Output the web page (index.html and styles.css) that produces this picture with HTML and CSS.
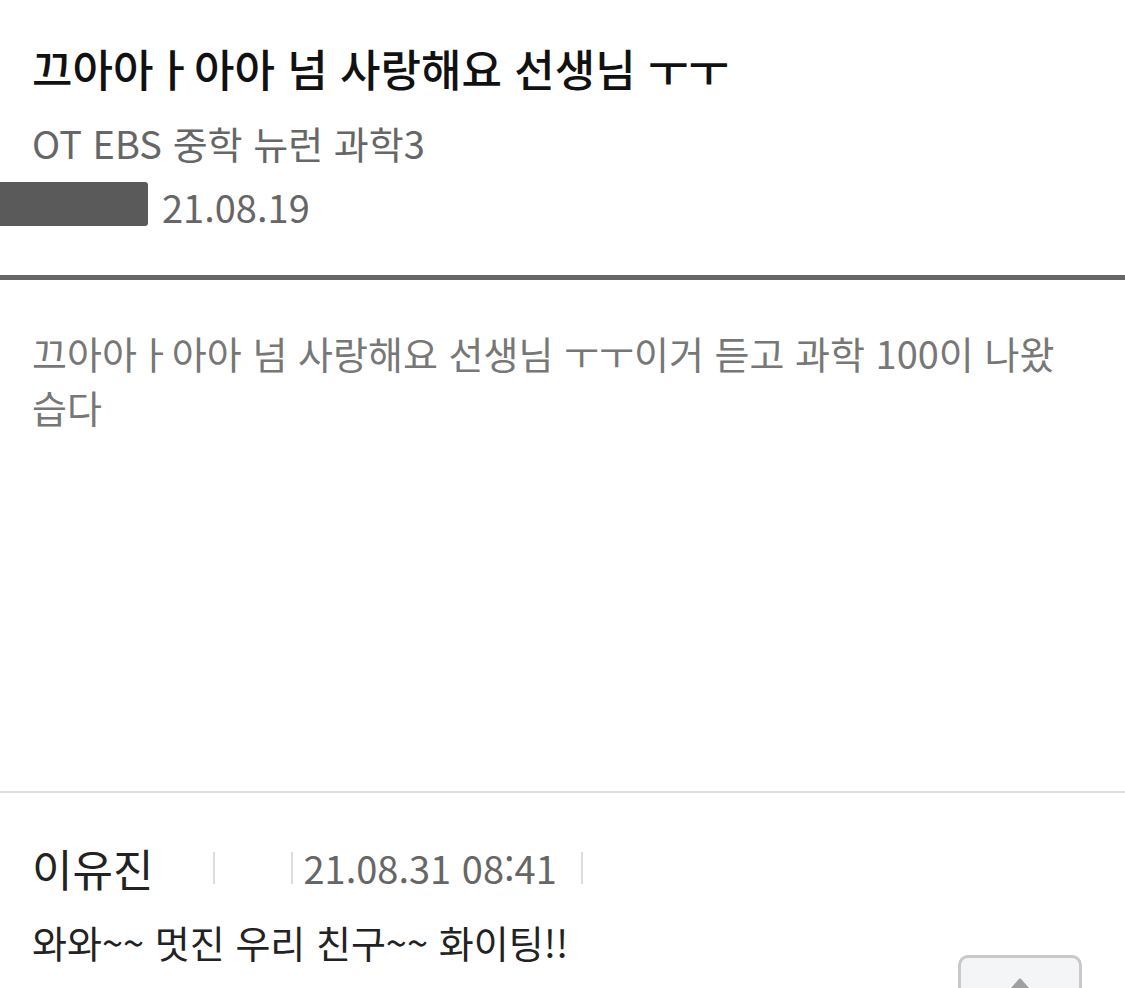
FILE: index.html
```html
<!DOCTYPE html>
<html lang="ko">
<head>
<meta charset="utf-8">
<link rel="stylesheet" href="styles.css">
</head>
<body>
<div class="page">
  <header class="post-head">
    <h1 class="title">끄아아ㅏ아아 넘 사랑해요 선생님 ㅜㅜ</h1>
    <div class="course">OT EBS 중학 뉴런 과학3</div>
    <div class="meta"><span class="redact"></span><span class="date">21.08.19</span></div>
  </header>
  <div class="post-body">끄아아ㅏ아아 넘 사랑해요 선생님 ㅜㅜ이거 듣고 과학 100이 나왔습다</div>
  <section class="comment">
    <div class="c-meta">
      <span class="c-name">이유진</span>
      <span class="bar bar-first"></span>
      <span class="gap"></span>
      <span class="bar"></span>
      <span class="c-date">21.08.31 08:41</span>
      <span class="bar"></span>
    </div>
    <div class="c-text">와와~~ 멋진 우리 친구~~ 화이팅!!</div>
  </section>
</div>
<button class="top-btn" aria-label="맨 위로"><svg width="40" height="30" viewBox="0 0 40 30"><path d="M20 4 L34 20 L6 20 Z" fill="#a0a0a0" stroke="#a0a0a0" stroke-width="3" stroke-linejoin="round"/></svg></button>
</body>
</html>
```
FILE: styles.css
```css
html, body {
  margin: 0;
  padding: 0;
  background: #fff;
  overflow: hidden;
}
body {
  font-family: "Noto Sans CJK KR", "Noto Sans", sans-serif;
  width: 1125px;
  height: 988px;
  position: relative;
}
.page {
  display: flex;
  flex-direction: column;
}
.post-head {
  padding: 38px 0 0 32px;
  height: 280px;
  box-sizing: border-box;
  border-bottom: 5px solid #666;
}
.title {
  margin: 0;
  font-size: 44px;
  font-weight: 500;
  color: #111;
  line-height: 60px;
}
.course {
  margin-top: 18px;
  font-size: 38px;
  color: #666;
  line-height: 54px;
}
.meta {
  display: flex;
  align-items: center;
  margin-left: -32px;
  margin-top: 10px;
  height: 54px;
}
.redact {
  display: block;
  width: 148px;
  height: 44px;
  margin-top: -6px;
  background: #5a5a5a;
  border-radius: 0 3px 3px 0;
}
.date {
  margin-left: 14px;
  font-size: 38px;
  color: #666;
  line-height: 54px;
}
.post-body {
  padding: 46px 60px 0 32px;
  height: 513px;
  box-sizing: border-box;
  font-size: 38px;
  line-height: 54px;
  color: #777;
  border-bottom: 2px solid #ddd;
}
.comment {
  padding: 45px 32px 0 32px;
}
.c-meta {
  display: flex;
  align-items: center;
  height: 60px;
}
.c-name {
  font-size: 44px;
  color: #222;
  line-height: 60px;
}
.bar {
  display: block;
  width: 2px;
  height: 32px;
  background: #ddd;
}
.bar-first { margin-left: 60px; }
.gap { display: block; width: 76px; }
.c-date {
  margin-left: 10px;
  margin-right: 24px;
  font-size: 38px;
  color: #666;
  line-height: 60px;
}
.c-text {
  margin-top: 19px;
  font-size: 38px;
  color: #222;
  line-height: 50px;
}
.top-btn {
  position: absolute;
  left: 958px;
  top: 955px;
  width: 124px;
  height: 70px;
  background: #f4f5f6;
  border: 3px solid #c9c9c9;
  border-radius: 10px;
  padding: 18px 0 0 0;
  display: flex;
  justify-content: center;
  align-items: flex-start;
  box-sizing: border-box;
}
```
